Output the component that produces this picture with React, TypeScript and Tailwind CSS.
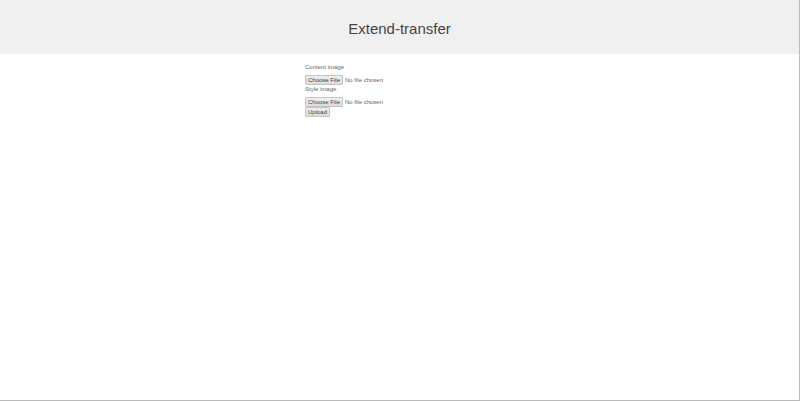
export default function App() {
  const file =
    "block h-[10px] w-full text-[6px] leading-[10px] text-[#666] file:mr-[2px] file:box-border file:h-[10px] file:rounded-[1px] file:border file:border-solid file:border-[#c4c4c4] file:bg-linear-to-b file:from-[#f0f0f0] file:to-[#dcdcdc] file:px-[2px] file:py-0 file:text-[6px] file:leading-[8px] file:text-[#444]";
  const label = "block h-3 leading-[8px]";
  return (
    <div className="flex min-h-screen flex-col border-r border-b border-[#bbb] bg-white font-['Liberation_Sans',Arial,sans-serif] text-[6px] text-[#666]">
      <header className="bg-[#f0f0f0] pt-[17px] pb-[13px]">
        <h1 className="text-center text-[15px] leading-6 text-[#444]">Extend-transfer</h1>
      </header>
      <form className="mx-auto mt-[9px] w-[189px]" onSubmit={(e) => e.preventDefault()}>
        <label htmlFor="content" className={label}>Content image</label>
        <input id="content" type="file" className={file} />
        <label htmlFor="style" className={label}>Style image</label>
        <input id="style" type="file" className={file} />
        <button type="submit" className="block h-[10px] rounded-[1px] border border-[#c4c4c4] bg-linear-to-b from-[#f0f0f0] to-[#dcdcdc] px-[2px] leading-[8px] text-[#444]">Upload</button>
      </form>
    </div>
  );
}
